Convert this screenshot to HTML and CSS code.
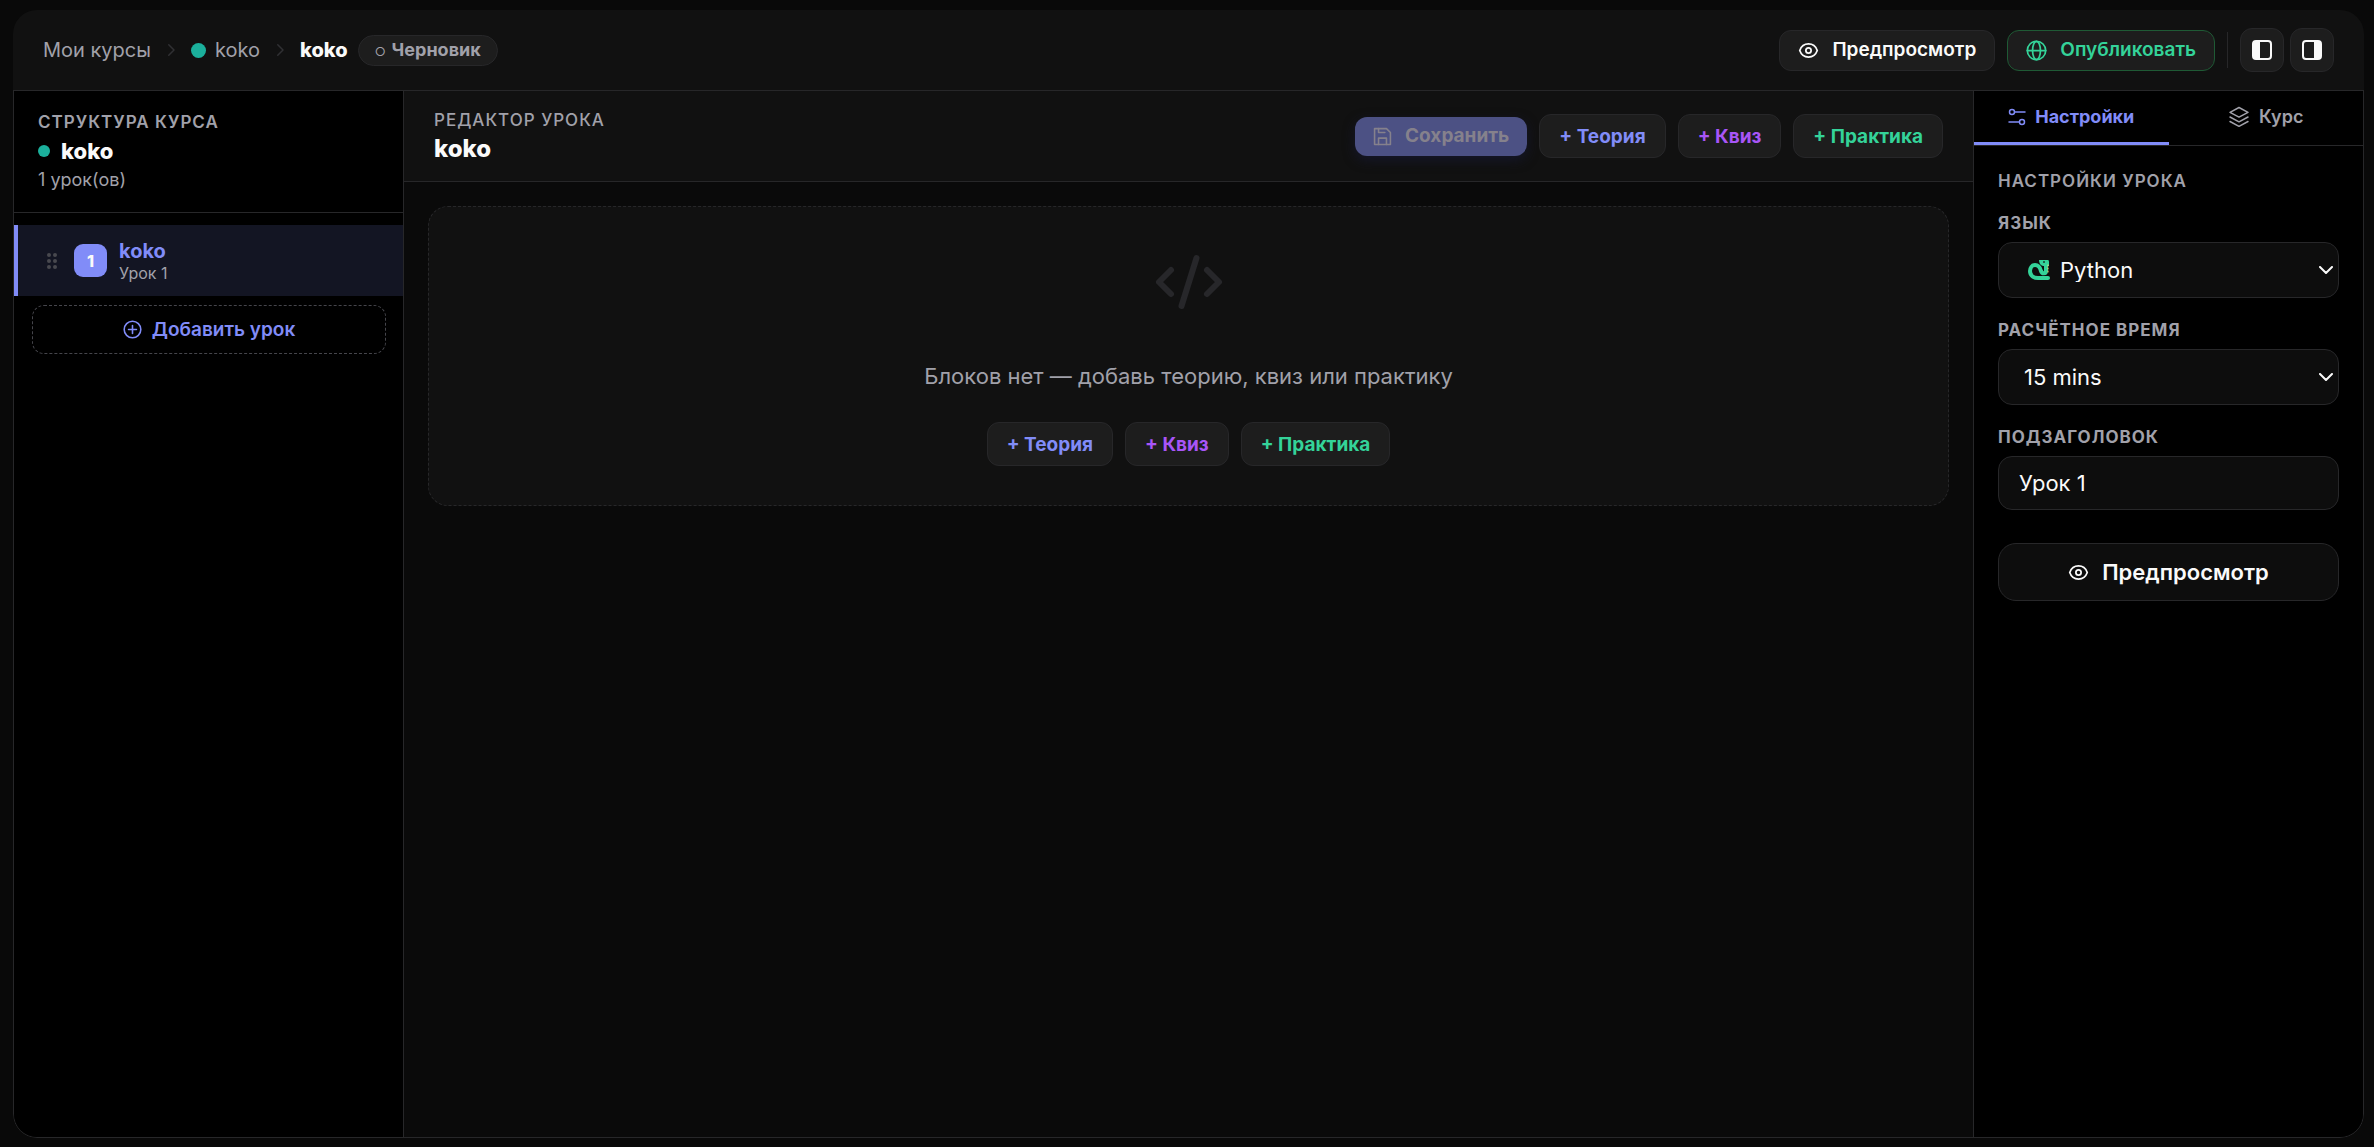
FILE: index.html
```html
<!DOCTYPE html>
<html lang="ru">
<head>
<meta charset="utf-8">
<title>koko — Редактор урока</title>
<link rel="stylesheet" href="styles.css">
</head>
<body>
<svg class="sprite" aria-hidden="true">
  <symbol id="eye" viewBox="0 0 24 24"><path d="M2 12c1.400-4 5-7.500 10-7.500S20.600 8 22 12c-1.400 4-5 7.500-10 7.500S3.400 16 2 12z"/><circle cx="12" cy="12" r="3"/></symbol>
  <symbol id="chevron" viewBox="0 0 24 24"><path d="m9 5 7 7-7 7"/></symbol>
</svg>
<div class="app">
  <header class="topbar">
    <nav class="crumbs">
      <a class="crumb" href="#">Мои курсы</a>
      <svg class="sep"><use href="#chevron"/></svg>
      <a class="crumb crumb-course" href="#"><span class="dot dot-lg"></span>koko</a>
      <svg class="sep"><use href="#chevron"/></svg>
      <span class="crumb-current">koko</span>
      <span class="status"><span class="ring">○</span>Черновик</span>
    </nav>
    <div class="actions">
      <button class="btn btn-top"><svg class="ico"><use href="#eye"/></svg>Предпросмотр</button>
      <button class="btn btn-top btn-publish"><svg class="ico" viewBox="0 0 24 24"><circle cx="12" cy="12" r="10.500"/><ellipse cx="12" cy="12" rx="4.500" ry="10.500"/><path d="M1.500 12h21"/></svg>Опубликовать</button>
      <span class="divider"></span>
      <div class="toggles">
        <button class="btn btn-icon" aria-label="Левая панель"><svg viewBox="0 0 22 22"><rect x="2" y="2" width="18" height="18" rx="3"/><path class="fill" d="M2 2h7v18H2z"/></svg></button>
        <button class="btn btn-icon" aria-label="Правая панель"><svg viewBox="0 0 22 22"><rect x="2" y="2" width="18" height="18" rx="3"/><path class="fill" d="M13 2h7v18h-7z"/></svg></button>
      </div>
    </div>
  </header>
  <div class="workspace">
    <aside class="structure">
      <div class="structure-head">
        <h2 class="overline">Структура курса</h2>
        <div class="course-name"><span class="dot"></span>koko</div>
        <div class="course-meta">1 урок(ов)</div>
      </div>
      <div class="lessons">
        <a class="lesson" href="#">
          <svg class="grip" viewBox="0 0 10 16"><circle cx="2" cy="2" r="2"/><circle cx="8" cy="2" r="2"/><circle cx="2" cy="8" r="2"/><circle cx="8" cy="8" r="2"/><circle cx="2" cy="14" r="2"/><circle cx="8" cy="14" r="2"/></svg>
          <span class="lesson-num">1</span>
          <span class="lesson-text"><span class="lesson-title">koko</span><span class="lesson-sub">Урок 1</span></span>
        </a>
        <button class="add-lesson"><svg viewBox="0 0 24 24"><circle cx="12" cy="12" r="10.500"/><path d="M12 7v10M7 12h10"/></svg>Добавить урок</button>
      </div>
    </aside>
    <main class="editor">
      <div class="editor-head">
        <div>
          <div class="overline overline-medium">Редактор урока</div>
          <h1 class="editor-title">koko</h1>
        </div>
        <div class="block-actions">
          <button class="btn-save" disabled><svg viewBox="0 0 24 24"><path d="M2 2h15l5 5v15H2z"/><path d="M7 2v5h8M7 22v-8h10v8"/></svg>Сохранить</button>
          <button class="btn btn-block theory">+ Теория</button>
          <button class="btn btn-block quiz">+ Квиз</button>
          <button class="btn btn-block practice">+ Практика</button>
        </div>
      </div>
      <div class="canvas">
        <section class="empty">
          <svg class="empty-icon" viewBox="0 0 24 24"><path d="m18 16 4-4-4-4M6 8l-4 4 4 4M14.500 4l-5 16"/></svg>
          <p class="empty-text">Блоков нет — добавь теорию, квиз или практику</p>
          <div class="block-actions">
            <button class="btn btn-block theory">+ Теория</button>
            <button class="btn btn-block quiz">+ Квиз</button>
            <button class="btn btn-block practice">+ Практика</button>
          </div>
        </section>
      </div>
    </main>
    <aside class="settings">
      <div class="tabs">
        <button class="tab tab-active"><svg viewBox="0 0 18 18"><circle cx="4" cy="4" r="2.500"/><path d="M7 4h10M1 14h10"/><circle cx="14" cy="14" r="2.500"/></svg>Настройки</button>
        <button class="tab"><svg class="layers" viewBox="0 0 22 22"><path d="m11 1.500 9 4.800-9 4.800-9-4.800zM2 11l9 4.800 9-4.800M2 15.500l9 4.800 9-4.800"/></svg>Курс</button>
      </div>
      <form class="form">
        <h2 class="overline form-title">Настройки урока</h2>
        <div class="field">
          <label class="overline" for="lang">Язык</label>
          <div class="select">
            <svg class="snake" viewBox="0 0 22 22"><path class="body" d="M18 5v7c0 3-4 3-5 0-1-4-3-6-6-6-3 0-5 3-5 6 0 5 4 7 8 7h10"/><path class="head" d="M11 1h9q1 0 1 2v4h-6q-4-1-4-6z"/><path class="belly" d="M20 6v8"/><circle class="eye" cx="16" cy="3" r="1"/></svg>
            <select id="lang" class="with-icon"><option>Python</option></select>
            <svg class="arrow" viewBox="0 0 14 8"><path d="m1 1 6 6 6-6"/></svg>
          </div>
        </div>
        <div class="field">
          <label class="overline" for="time">Расчётное время</label>
          <div class="select">
            <select id="time"><option>15 mins</option></select>
            <svg class="arrow" viewBox="0 0 14 8"><path d="m1 1 6 6 6-6"/></svg>
          </div>
        </div>
        <div class="field">
          <label class="overline" for="subtitle">Подзаголовок</label>
          <input id="subtitle" type="text" value="Урок 1">
        </div>
        <button class="btn-preview" type="button"><svg class="ico"><use href="#eye"/></svg>Предпросмотр</button>
      </form>
    </aside>
  </div>
</div>
</body>
</html>
```
FILE: styles.css
```css
:root {
  --line: #272729;
  --surface: #111;
  --raised: #1d1d1d;
  --muted: #a1a1aa;
  --text: #fafafa;
  --accent: #818cf8;
  --green: #34d399;
  --purple: #a855f7;
}
* { box-sizing: border-box; }
body {
  margin: 0;
  background: #090909;
  color: var(--text);
  font: 20px/24px Inter, "Liberation Sans", sans-serif;
}
h1, h2, p { margin: 0; }
a { color: inherit; text-decoration: none; }
button, input, select { font: inherit; color: inherit; margin: 0; }
svg { fill: none; stroke: currentColor; stroke-width: 2; stroke-linecap: round; stroke-linejoin: round; flex: none; }
.sprite { position: absolute; width: 0; height: 0; }

.app {
  display: flex;
  flex-direction: column;
  min-height: calc(100vh - 19px);
  margin: 10px 10px 9px 13px;
  border-radius: 24px;
  overflow: hidden;
}
.topbar {
  display: flex;
  align-items: center;
  justify-content: space-between;
  height: 81px;
  padding: 0 30px;
  background: var(--surface);
  border-bottom: 1px solid var(--line);
}
.crumbs, .actions, .toggles, .block-actions { display: flex; align-items: center; }
.crumb { color: var(--muted); }
.crumb-course { display: flex; align-items: center; gap: 9px; }
.sep { width: 18px; height: 18px; margin: 0 11px; color: #303033; }
.dot { width: 12px; height: 12px; border-radius: 50%; background: #1bb09c; }
.dot-lg { width: 15px; height: 15px; }
.crumb-current { font-weight: 800; }
.status {
  display: flex;
  align-items: center;
  gap: 6px;
  height: 31px;
  margin-left: 10px;
  padding: 0 16px;
  border: 1px solid var(--line);
  border-radius: 16px;
  background: var(--raised);
  color: var(--muted);
  font-size: 18px;
  font-weight: 700;
}
.ring { padding-top: 3px; font-size: 12px; font-weight: 400; }
.actions { gap: 12px; }
.btn {
  display: flex;
  align-items: center;
  justify-content: center;
  border: 1px solid var(--line);
  border-radius: 12px;
  background: var(--raised);
  font-size: 19px;
  font-weight: 600;
}
.btn-top { gap: 13px; height: 41px; padding: 0 18px; }
.ico { width: 21px; height: 21px; }
.btn-publish { color: var(--green); border-color: #1f5a35; }
.divider { width: 1px; height: 36px; background: var(--line); }
.toggles { gap: 6px; }
.btn-icon { width: 44px; height: 44px; padding: 0; }
.btn-icon svg { width: 22px; height: 22px; }
.btn-icon .fill { fill: currentColor; stroke: none; }

.workspace {
  display: grid;
  grid-template-columns: 390px 1fr 390px;
  flex: 1;
  border: 1px solid var(--line);
  border-top: 0;
  border-radius: 0 0 24px 24px;
  overflow: hidden;
}
.structure { background: #000; border-right: 1px solid var(--line); }
.structure-head { padding: 20px 24px; border-bottom: 1px solid var(--line); }
.overline {
  display: block;
  color: var(--muted);
  font-size: 17px;
  line-height: 22px;
  font-weight: 600;
  letter-spacing: 1px;
  text-transform: uppercase;
}
.overline-medium { font-weight: 500; }
.course-name { display: flex; align-items: center; gap: 11px; margin-top: 5px; font-size: 22px; line-height: 26px; font-weight: 800; }
.course-meta { margin-top: 4px; color: var(--muted); font-size: 18px; line-height: 24px; }
.lessons { padding-top: 12px; }
.lesson {
  display: flex;
  align-items: center;
  height: 71px;
  padding-left: 29px;
  border-left: 4px solid var(--accent);
  background: #131523;
}
.grip { width: 10px; height: 16px; fill: #48484f; stroke: none; }
.lesson-num {
  display: grid;
  place-items: center;
  width: 33px;
  height: 33px;
  margin: 0 12px 0 17px;
  border-radius: 9px;
  background: var(--accent);
  font-size: 16px;
  font-weight: 800;
}
.lesson-text { display: flex; flex-direction: column; }
.lesson-title { color: var(--accent); font-weight: 700; }
.lesson-sub { color: var(--muted); font-size: 16px; line-height: 20px; }
.add-lesson {
  display: flex;
  align-items: center;
  justify-content: center;
  gap: 10px;
  width: calc(100% - 35px);
  height: 49px;
  margin: 9px 17px 0 18px;
  border: 1px dashed #45454b;
  border-radius: 12px;
  background: none;
  color: var(--accent);
  font-size: 19px;
  font-weight: 600;
}
.add-lesson svg { width: 19px; height: 19px; }

.editor { background: #0a0a0a; }
.editor-head {
  display: flex;
  align-items: center;
  justify-content: space-between;
  height: 91px;
  padding: 0 30px;
  background: var(--surface);
  border-bottom: 1px solid var(--line);
}
.editor-title { margin-top: 4px; font-size: 24px; line-height: 28px; font-weight: 800; }
.block-actions { gap: 12px; }
.btn-block { height: 44px; padding: 1px 19px 0; font-weight: 700; }
.theory { color: var(--accent); }
.quiz { color: var(--purple); }
.practice { color: var(--green); }
.btn-save {
  display: flex;
  align-items: center;
  gap: 13px;
  height: 39px;
  padding: 0 18px;
  border: 0;
  border-radius: 12px;
  background: #4c5184;
  box-shadow: 0 4px 12px #15172a;
  color: #85818c;
  font-size: 19px;
  font-weight: 700;
}
.btn-save svg { width: 19px; height: 21px; }
.canvas { padding: 24px; }
.empty {
  display: flex;
  flex-direction: column;
  align-items: center;
  padding: 39px 24px;
  border: 1px dashed var(--line);
  border-radius: 20px;
  background: var(--surface);
}
.empty-icon { width: 72px; height: 72px; color: #27272a; }
.empty-text { margin: 44px 0 32px; color: var(--muted); font-size: 22px; line-height: 28px; }

.settings { background: #000; border-left: 1px solid var(--line); }
.tabs { display: grid; grid-template-columns: 1fr 1fr; height: 55px; border-bottom: 1px solid var(--line); }
.tab {
  display: flex;
  align-items: center;
  justify-content: center;
  gap: 9px;
  padding: 0;
  border: 0;
  border-bottom: 3px solid transparent;
  background: none;
  color: var(--muted);
  font-size: 18px;
  font-weight: 600;
}
.tab svg { width: 18px; height: 18px; stroke-width: 1.500; }
.tab .layers { width: 22px; height: 22px; }
.tab-active { color: var(--accent); border-color: var(--accent); font-weight: 700; }
.form { padding: 24px; }
.form-title { margin-bottom: 20px; }
.field { margin-bottom: 21px; }
.field .overline { margin-bottom: 8px; font-weight: 700; }
.select { position: relative; }
select, input {
  display: block;
  width: 100%;
  height: 56px;
  padding: 0 25px;
  border: 1px solid var(--line);
  border-radius: 14px;
  background: #0d0d0d;
  font-size: 22px;
  appearance: none;
}
select.with-icon { padding-left: 61px; }
input { height: 54px; padding: 0 20px; }
.arrow { position: absolute; right: 6px; top: 24px; width: 14px; height: 8px; pointer-events: none; }
.snake { position: absolute; left: 30px; top: 17px; width: 22px; height: 22px; stroke: none; pointer-events: none; }
.snake .body { stroke: #34d399; stroke-width: 4; }
.snake .head { fill: #34d399; }
.snake .belly { stroke: #f5d76e; stroke-width: 1; stroke-dasharray: 1 2; }
.snake .eye { fill: #1b3a2f; }
.btn-preview {
  display: flex;
  align-items: center;
  justify-content: center;
  gap: 13px;
  width: 100%;
  height: 58px;
  margin-top: 33px;
  border: 1px solid var(--line);
  border-radius: 18px;
  background: #0d0d0d;
  font-size: 22px;
  font-weight: 600;
}
```
